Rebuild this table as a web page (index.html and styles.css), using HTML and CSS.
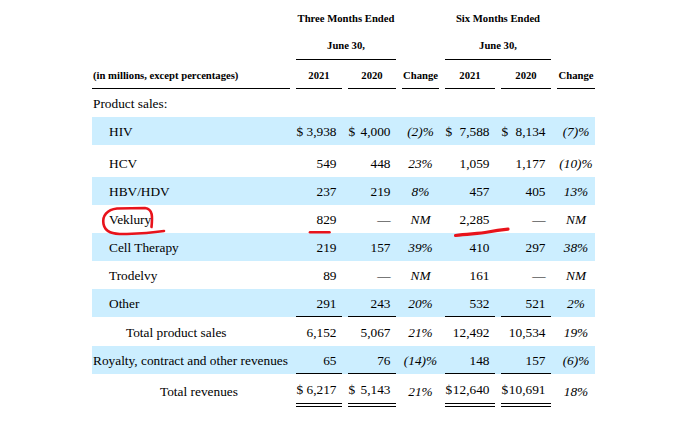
FILE: index.html
```html
<!DOCTYPE html>
<html lang="en">
<head>
<meta charset="utf-8">
<title>Revenues</title>
<link rel="stylesheet" href="styles.css">
</head>
<body>
<div class="sheet">
  <div class="row head1">
    <div class="c span-a hd">Three Months Ended</div>
    <div class="c span-b hd">Six Months Ended</div>
  </div>
  <div class="row head2">
    <div class="c span-a hd ul">June 30,</div>
    <div class="c span-b hd ul">June 30,</div>
  </div>
  <div class="row head3">
    <div class="c lbl hd ul">(in millions, except percentages)</div>
    <div class="c hd ctr ul">2021</div>
    <div class="c hd ctr ul">2020</div>
    <div class="c hd ctr ul">Change</div>
    <div class="c hd ctr ul">2021</div>
    <div class="c hd ctr ul">2020</div>
    <div class="c hd ctr ul">Change</div>
  </div>

  <div class="row body">
    <div class="c lbl">Product sales:</div>
  </div>

  <div class="row body shade">
    <div class="c lbl ind1">HIV</div>
    <div class="c num"><span>$</span><span class="v">3,938</span></div>
    <div class="c num"><span>$</span><span class="v">4,000</span></div>
    <div class="c pct">(2)%</div>
    <div class="c num"><span>$</span><span class="v">7,588</span></div>
    <div class="c num"><span>$</span><span class="v">8,134</span></div>
    <div class="c pct">(7)%</div>
  </div>

  <div class="row body tall">
    <div class="c lbl ind1">HCV</div>
    <div class="c num"><span class="v">549</span></div>
    <div class="c num"><span class="v">448</span></div>
    <div class="c pct">23%</div>
    <div class="c num"><span class="v">1,059</span></div>
    <div class="c num"><span class="v">1,177</span></div>
    <div class="c pct">(10)%</div>
  </div>

  <div class="row body shade">
    <div class="c lbl ind1">HBV/HDV</div>
    <div class="c num"><span class="v">237</span></div>
    <div class="c num"><span class="v">219</span></div>
    <div class="c pct">8%</div>
    <div class="c num"><span class="v">457</span></div>
    <div class="c num"><span class="v">405</span></div>
    <div class="c pct">13%</div>
  </div>

  <div class="row body">
    <div class="c lbl ind1">Veklury</div>
    <div class="c num"><span class="v">829</span></div>
    <div class="c num"><span class="v">—</span></div>
    <div class="c pct">NM</div>
    <div class="c num"><span class="v">2,285</span></div>
    <div class="c num"><span class="v">—</span></div>
    <div class="c pct">NM</div>
  </div>

  <div class="row body shade">
    <div class="c lbl ind1">Cell Therapy</div>
    <div class="c num"><span class="v">219</span></div>
    <div class="c num"><span class="v">157</span></div>
    <div class="c pct">39%</div>
    <div class="c num"><span class="v">410</span></div>
    <div class="c num"><span class="v">297</span></div>
    <div class="c pct">38%</div>
  </div>

  <div class="row body">
    <div class="c lbl ind1">Trodelvy</div>
    <div class="c num"><span class="v">89</span></div>
    <div class="c num"><span class="v">—</span></div>
    <div class="c pct">NM</div>
    <div class="c num"><span class="v">161</span></div>
    <div class="c num"><span class="v">—</span></div>
    <div class="c pct">NM</div>
  </div>

  <div class="row body shade">
    <div class="c lbl ind1">Other</div>
    <div class="c num ul"><span class="v">291</span></div>
    <div class="c num ul"><span class="v">243</span></div>
    <div class="c pct">20%</div>
    <div class="c num ul"><span class="v">532</span></div>
    <div class="c num ul"><span class="v">521</span></div>
    <div class="c pct">2%</div>
  </div>

  <div class="row body mid">
    <div class="c lbl ind2">Total product sales</div>
    <div class="c num"><span class="v">6,152</span></div>
    <div class="c num"><span class="v">5,067</span></div>
    <div class="c pct">21%</div>
    <div class="c num"><span class="v">12,492</span></div>
    <div class="c num"><span class="v">10,534</span></div>
    <div class="c pct">19%</div>
  </div>

  <div class="row body shade">
    <div class="c lbl">Royalty, contract and other revenues</div>
    <div class="c num ul"><span class="v">65</span></div>
    <div class="c num ul"><span class="v">76</span></div>
    <div class="c pct">(14)%</div>
    <div class="c num ul"><span class="v">148</span></div>
    <div class="c num ul"><span class="v">157</span></div>
    <div class="c pct">(6)%</div>
  </div>

  <div class="row total">
    <div class="c lbl ind3">Total revenues</div>
    <div class="c num dbl"><span>$</span><span class="v">6,217</span></div>
    <div class="c num dbl"><span>$</span><span class="v">5,143</span></div>
    <div class="c pct">21%</div>
    <div class="c num dbl"><span>$</span><span class="v">12,640</span></div>
    <div class="c num dbl"><span>$</span><span class="v">10,691</span></div>
    <div class="c pct">18%</div>
  </div>
</div>

<svg class="marks" width="673" height="422" viewBox="0 0 673 422" aria-hidden="true">
  <path d="M151.5 227 C152.5 217 153 209 145 208 L117 208.5 C107 209.5 102 216 103.5 224 C105 232 112 234.5 127 234 C141 233.5 153 232.5 164 231" fill="none" stroke="#e8131b" stroke-width="2.6" stroke-linecap="round" stroke-linejoin="round"/>
  <path d="M310 232.2 L329.5 232.2" fill="none" stroke="#e8131b" stroke-width="2.6" stroke-linecap="round"/>
  <path d="M455.5 235.5 C468 233.5 478 234 488 232 C496 230.5 502 229.8 508 229.2" fill="none" stroke="#e8131b" stroke-width="3.2" stroke-linecap="round"/>
</svg>
</body>
</html>
```

FILE: styles.css
```css
html, body {
  margin: 0;
  padding: 0;
  background: #ffffff;
}

body {
  font-family: "Liberation Serif", "Times New Roman", serif;
  font-size: 13.333px;
  color: #000000;
  position: relative;
  width: 673px;
  height: 422px;
  overflow: hidden;
}

.sheet {
  margin-left: 92px;
  width: 503px;
}

.row {
  display: grid;
  grid-template-columns: 198px 46px 48px 37px 50px 50px 38px;
  column-gap: 6px;
  height: 28px;
}

.row.shade {
  background: #cceeff;
}

.row.body .c {
  padding-top: 2px;
}

.row.tall {
  height: 32px;
}

.row.body.tall .c {
  padding-top: 5px;
}

.row.mid {
  height: 29px;
}

.row.total {
  height: 33px;
}

.row.total .c {
  padding-top: 2px;
}

.head1 {
  height: 36px;
}

.head2 {
  height: 24px;
}

.head2 .c {
  padding-bottom: 4px;
}

.head3 {
  height: 29px;
}

.head3 .c {
  padding-top: 3px;
}

.c {
  display: flex;
  align-items: center;
  white-space: nowrap;
  box-sizing: border-box;
}

.hd {
  font-weight: bold;
  font-size: 10.667px;
  justify-content: center;
}

.hd.lbl {
  justify-content: flex-start;
}

.span-a {
  grid-column: 2 / 4;
}

.span-b {
  grid-column: 5 / 7;
}

.ctr {
  justify-content: center;
}

.lbl {
  padding-left: 1px;
}

.row.body .c.ind1 {
  padding-left: 17px;
}

.row.body .c.ind2 {
  padding-left: 34px;
}

.row.total .c.ind3 {
  padding-left: 68px;
}

.row.body .c.num,
.row.total .c.num {
  padding-left: 0.5px;
  padding-right: 5.5px;
}

.num .v {
  margin-left: auto;
}

.pct {
  font-style: italic;
  justify-content: center;
}

.ul {
  border-bottom: 1px solid #000000;
}

.dbl {
  border-bottom: 4px double #000000;
}

.marks {
  position: absolute;
  left: 0;
  top: 0;
  pointer-events: none;
}
```
